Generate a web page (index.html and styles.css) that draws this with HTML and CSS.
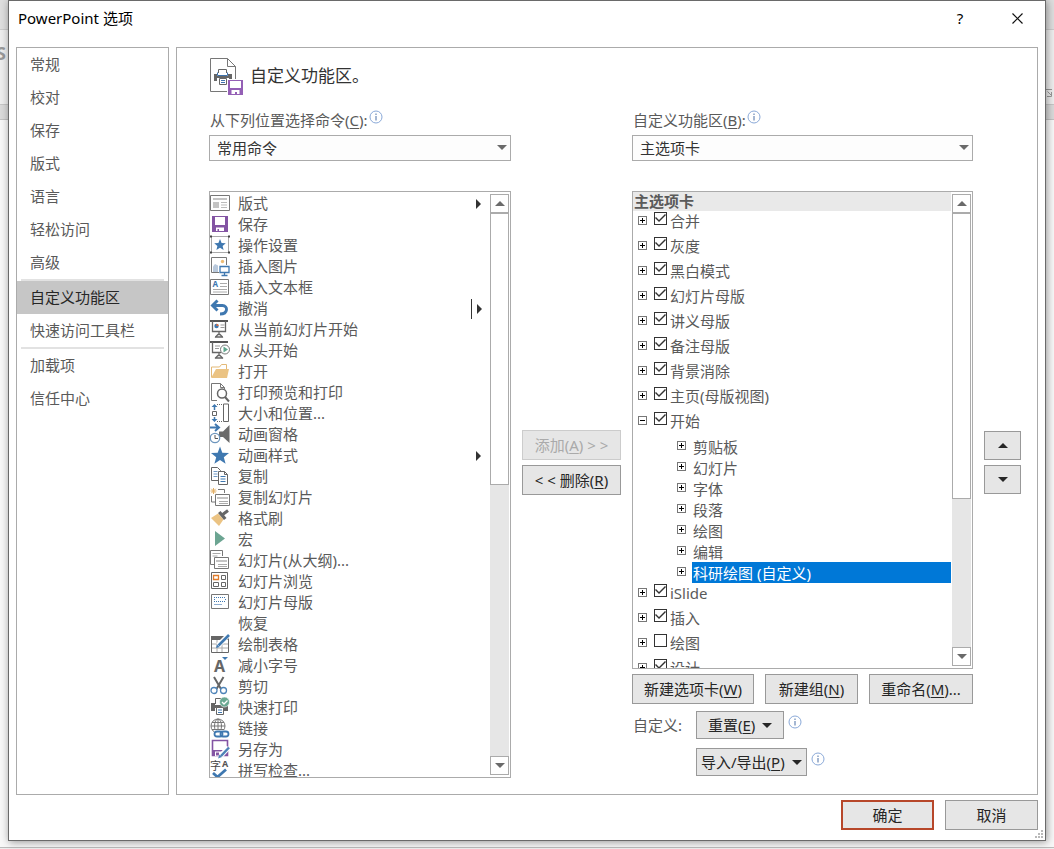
FILE: index.html
```html
<!DOCTYPE html>
<html lang="zh-CN">
<head>
<meta charset="utf-8">
<title>PowerPoint 选项</title>
<link rel="stylesheet" href="styles.css">
</head>
<body class="desktop">
<span class="backdrop-letter" aria-hidden="true">S</span>
<svg class="backdrop-launcher" width="8" height="9" viewBox="0 0 8 9" fill="none" stroke="#999"><path d="M0 .5h6M1.500 2.500l4 4M5.500 3v4.500H1"/></svg>
<div class="dialog" role="dialog" aria-labelledby="dialog-title">
  <header class="titlebar">
    <h1 class="title" id="dialog-title">PowerPoint 选项</h1>
    <button class="title-btn" type="button">?</button>
    <button class="title-btn" type="button" aria-label="关闭"><svg width="11" height="11" viewBox="0 0 11 11"><path d="M.5.5l10 10M10.500.5l-10 10" stroke="#111" stroke-width="1.2"/></svg></button>
  </header>

  <div class="content">
    <nav class="sidebar">
      <a class="nav-item" href="#">常规</a>
      <a class="nav-item" href="#">校对</a>
      <a class="nav-item" href="#">保存</a>
      <a class="nav-item" href="#">版式</a>
      <a class="nav-item" href="#">语言</a>
      <a class="nav-item" href="#">轻松访问</a>
      <a class="nav-item" href="#">高级</a>
      <hr class="nav-sep">
      <a class="nav-item nav-item-active" href="#">自定义功能区</a>
      <a class="nav-item" href="#">快速访问工具栏</a>
      <hr class="nav-sep">
      <a class="nav-item" href="#">加载项</a>
      <a class="nav-item" href="#">信任中心</a>
    </nav>

    <main class="panel">
      <div class="panel-head">
        <svg width="34" height="38" viewBox="0 0 34 38" fill="none">
          <path d="M.5.5h17l8 8v25H.5z" fill="#fff" stroke="#777"/><path d="M17.500.5v8h8" stroke="#777"/>
          <path d="M8.500 15V11.500h8V15" fill="#fff" stroke="#666"/>
          <path d="M4 16h3v2h11v-2h4v7h-3v-3H7v3H4z" fill="#666"/><path d="M7.500 14.500v3h10v-3" stroke="#3f73ad"/>
          <path d="M9.500 20.500h7v6h-7z" fill="#fff" stroke="#666"/><path d="M11 22.500h4M11 24.500h4" stroke="#3f73ad"/>
          <path d="M17 21h17v17H17z" fill="#fff"/><path d="M18 22h15v15H18z" fill="#945fb5"/><path d="M20 23h11v7H20z" fill="#fff"/><path d="M21.500 32h8v4h-2.500v-2h-2v2h-3.500z" fill="#fff"/>
        </svg>
        <h2 class="panel-title">自定义功能区。</h2>
      </div>

      <div class="columns">
        <div class="picker picker-left">
          <div class="field-label"><label for="source">从下列位置选择命令(<u>C</u>):</label><svg class="info" viewBox="0 0 14 14"><circle cx="7" cy="7" r="6"/><path d="M7 6v4.500M7 3.500v1.500"/></svg></div>
          <div class="select-box"><select id="source"><option>常用命令</option></select></div>
        </div>
        <div class="picker picker-right">
          <div class="field-label"><label for="target">自定义功能区(<u>B</u>):</label><svg class="info" viewBox="0 0 14 14"><circle cx="7" cy="7" r="6"/><path d="M7 6v4.500M7 3.500v1.500"/></svg></div>
          <div class="select-box"><select id="target"><option>主选项卡</option></select></div>
        </div>

        <div class="listbox command-box">
          <ul class="commands">
            <li><svg class="ico" viewBox="0 0 20 20"><path d="M.5 1.500h19v15H.5z" fill="#fff" stroke="#777"/><path d="M3 4h14v2H3zM3 8h6v6H3z" fill="#c4c4c4"/><path d="M11 8.500h6M11 11h6M11 13.500h6" stroke="#bbb"/></svg><span>版式</span><i class="flyout"></i></li>
            <li><svg class="ico" viewBox="0 0 20 20"><path d="M2 1h16v16H2z" fill="#8354a3"/><path d="M5 2h10v8H5zM6 12.500h8V16h-5v-2H7.500v2H6z" fill="#fff"/></svg><span>保存</span></li>
            <li><svg class="ico" viewBox="0 0 20 20"><path d="M1.500.5h17v16h-17z" fill="#fff" stroke="#aaa"/><path d="M0-.5h2v2H0zM18-.5h2v2h-2zM0 15.500h2v2H0zM18 15.500h2v2h-2z" fill="#444"/><path d="M10 3l1.600 3.900 4.200.3-3.200 2.700 1 4.100-3.600-2.200L6.400 14l1-4.100-3.200-2.700 4.200-.3z" fill="#3f78b0"/></svg><span>操作设置</span></li>
            <li><svg class="ico" viewBox="0 0 20 20"><path d="M9 15.500H1.500V.5h15V8" fill="none" stroke="#777"/><circle cx="12.500" cy="4.500" r="1.700" fill="#eebd75"/><path d="M3 15V9.500L5 7l3 1.500V15z" fill="#b9c9dc"/><path d="M10 9.500h9v6h-9zM14.500 16v3M11.500 18.500h6" fill="none" stroke="#3f78b0" stroke-width="1.300"/></svg><span>插入图片</span></li>
            <li><svg class="ico" viewBox="0 0 20 20"><path d="M.5 1.500h18v15H.5z" fill="#fff" stroke="#777"/><text x="2.500" y="9" font-size="8" font-weight="700" fill="#3f78b0">A</text><path d="M10 5.500h7M10 8.500h7M3 11.500h14M3 14h14" stroke="#aaa"/></svg><span>插入文本框</span></li>
            <li><svg class="ico" viewBox="0 0 20 20"><path d="M7.500 1.500L2.500 6.500l5 5M3 6.500h9.500c5.500 0 6 8.500-2.500 8.500" fill="none" stroke="#3f78b0" stroke-width="2.900"/></svg><span>撤消</span><i class="flyout flyout-split"></i></li>
            <li><svg class="ico" viewBox="0 0 20 20"><path d="M0 1h18" stroke="#555" stroke-width="2"/><path d="M2.500 1v10.500h13V1M9 12v3M5 17.500l3-3h2l3 3M5 17h8" fill="none" stroke="#666" stroke-width="1.300"/><circle cx="6.500" cy="6" r="2.200" fill="#3f78b0"/><path d="M6.500 6V3.800A2.200 2.200 0 0 1 8.700 6z" fill="#df6d3b"/><path d="M10.500 5h4M10.500 7.500h4" stroke="#999"/></svg><span>从当前幻灯片开始</span></li>
            <li><svg class="ico" viewBox="0 0 20 20"><path d="M0 1h18" stroke="#555" stroke-width="2"/><path d="M2.500 1v10.500h9M9 12v3M5 17.500l3-3h2l3 3M5 17h8" fill="none" stroke="#666" stroke-width="1.300"/><path d="M5 5h5M5 7.500h4" stroke="#999"/><circle cx="15" cy="8.500" r="4.500" fill="#fff" stroke="#777"/><path d="M13.500 5.500l4.500 3-4.500 3z" fill="#5fa58c"/></svg><span>从头开始</span></li>
            <li><svg class="ico" viewBox="0 0 20 20"><path d="M1.500 15V5h8l2-2.500h5V7" fill="none" stroke="#e3b977"/><path d="M1 16l5-9h13l-2 9z" fill="#ebc383"/></svg><span>打开</span></li>
            <li><svg class="ico" viewBox="0 0 20 20"><path d="M7 17.500H1.500V.5h9l4 4V6M10.500.5v4h4" fill="none" stroke="#777"/><circle cx="12" cy="10.500" r="4.500" fill="#fff" stroke="#666" stroke-width="1.500"/><path d="M15 14l4 4.500" stroke="#666" stroke-width="2"/></svg><span>打印预览和打印</span></li>
            <li><svg class="ico" viewBox="0 0 20 20"><path d="M13.500 0h5v17.500h-5z" fill="#fff" stroke="#666"/><path d="M2.500 7.500h4v4h-4z" fill="none" stroke="#666"/><path d="M7 .5h6M7 17.500h6" stroke="#666" stroke-dasharray="1 1"/><path d="M1.500 3l3-3 3 3zM1.500 15l3 3 3-3z" fill="#3f78b0"/><path d="M4.500 2v4M4.500 13v3" stroke="#3f78b0" stroke-width="1.500"/></svg><span>大小和位置...</span></li>
            <li><svg class="ico" viewBox="0 0 20 20"><path d="M0 2.500h8M5-1l4 3.500L5 6" fill="none" stroke="#3f78b0" stroke-width="2"/><path d="M9 6.500h4L19.500 0v18L13 12H9z" fill="#6b6b6b"/><circle cx="5" cy="13" r="4.700" fill="#fff" stroke="#6c95bd" stroke-width="1.300"/><path d="M5 10v3.500h3" fill="none" stroke="#555"/></svg><span>动画窗格</span></li>
            <li><svg class="ico" viewBox="0 0 20 20"><path d="M10 .5l2.300 6.200 6.700.3-5.200 4.200 1.800 6.500-5.600-3.700-5.600 3.700 1.800-6.500L1 7l6.700-.3z" fill="#3f78b0"/></svg><span>动画样式</span><i class="flyout"></i></li>
            <li><svg class="ico" viewBox="0 0 20 20"><path d="M1.500.5h6l3 3v10h-9z" fill="#fff" stroke="#666"/><path d="M3.500 4.500h4M3.500 7h4M3.500 9.500h4" stroke="#6f98c4"/><path d="M8.500 4.500h6l3 3v10h-9z" fill="#fff" stroke="#666"/><path d="M14.500 4.500v3h3" fill="none" stroke="#666"/><path d="M10.500 9.500h5M10.500 12h5M10.500 14.500h5" stroke="#3f78b0"/></svg><span>复制</span></li>
            <li><svg class="ico" viewBox="0 0 20 20"><path d="M3.500 0v6M.5 3h6M1.300.8l4.400 4.400M5.700.8L1.300 5.200" stroke="#e3b066"/><path d="M8 1.500h6.500V5M1.500 8v6H5" fill="none" stroke="#777"/><path d="M5.500 6.500h14v11h-14z" fill="#fff" stroke="#777"/><path d="M7 9h11v2H7z" fill="#c4c4c4"/><path d="M9 13.500h9M9 15.500h9" stroke="#aaa"/></svg><span>复制幻灯片</span></li>
            <li><svg class="ico" viewBox="0 0 20 20"><path d="M1 9l7-4.500 5.500 6L9 17z" fill="#ebc383"/><path d="M8 4l2.500-2 6 7-2.500 2z" fill="#666"/><path d="M12 6l6-4.500" stroke="#666" stroke-width="3"/></svg><span>格式刷</span></li>
            <li><svg class="ico" viewBox="0 0 20 20"><path d="M5 1l10 7.500L5 16z" fill="#6ca592"/></svg><span>宏</span></li>
            <li><svg class="ico" viewBox="0 0 20 20"><path d="M4 13.500H.5V-.5h12V5" fill="#fff" stroke="#777"/><path d="M2.500 2.500h8M2.500 5h5" stroke="#aaa"/><path d="M4.500 6.500h14v11h-14z" fill="#fff" stroke="#777"/><path d="M6 9h11v2H6z" fill="#c4c4c4"/><path d="M8 13.500h9M8 15.500h9" stroke="#aaa"/></svg><span>幻灯片(从大纲)...</span></li>
            <li><svg class="ico" viewBox="0 0 20 20"><path d="M1.500.5h16v16h-16z" fill="#fff" stroke="#666"/><path d="M11.500 3.500h4v4h-4zM3.500 10.500h5v4h-5zM11.500 10.500h4v4h-4z" fill="none" stroke="#666"/><path d="M3.500 3.500h5v4h-5z" fill="none" stroke="#df7b2b" stroke-width="1.300"/></svg><span>幻灯片浏览</span></li>
            <li><svg class="ico" viewBox="0 0 20 20"><path d="M1.500 1.500h17v14h-17z" fill="#fff" stroke="#777"/><path d="M4 4.500h12M4 8.500h12" stroke="#3f78b0" stroke-dasharray="1 1"/><path d="M4 6.500h1M15 6.500h1" stroke="#3f78b0"/><path d="M4 11.500h8" stroke="#8faed0"/></svg><span>幻灯片母版</span></li>
            <li><svg class="ico" viewBox="0 0 20 20"></svg><span>恢复</span></li>
            <li><svg class="ico" viewBox="0 0 20 20"><path d="M1.500 1.500h17v16h-17z" fill="#fff" stroke="#666"/><path d="M1 1h17v4H1z" fill="#666"/><path d="M2 9h16M2 13h16M7 5v12M12 5v12" stroke="#aaa"/><path d="M18.500 0L8 10.500" stroke="#fff" stroke-width="5"/><path d="M19 0L8.500 10.500" stroke="#3f78b0" stroke-width="2.700"/><path d="M6 13l1-3.500L9.500 12z" fill="#3f78b0"/></svg><span>绘制表格</span></li>
            <li><svg class="ico" viewBox="0 0 20 20"><text x="4" y="16" font-size="16" font-weight="700" fill="#666">A</text><path d="M12 1h6l-3 3z" fill="#3f78b0"/></svg><span>减小字号</span></li>
            <li><svg class="ico" viewBox="0 0 20 20"><path d="M4 0l7 12M13.500 0l-7 12" stroke="#666" stroke-width="2"/><circle cx="4" cy="13.500" r="3" fill="#fff" stroke="#4d83b8" stroke-width="1.300"/><circle cx="13.500" cy="13.500" r="3" fill="#fff" stroke="#4d83b8" stroke-width="1.300"/></svg><span>剪切</span></li>
            <li><svg class="ico" viewBox="0 0 20 20"><path d="M5.500 6V.5h8V6" fill="#fff" stroke="#666"/><path d="M1 5h4v2h8V5h5v8h-4v-3H5v3H1z" fill="#666"/><path d="M6.500 9.500h7v7h-7z" fill="#fff" stroke="#666"/><path d="M8 12h4M8 14.500h4" stroke="#3f78b0"/><circle cx="14.500" cy="4" r="5" fill="#6aa892" stroke="#fff" stroke-width=".6"/><path d="M12 4l2 2 3.500-3.500" fill="none" stroke="#fff" stroke-width="1.300"/></svg><span>快速打印</span></li>
            <li><svg class="ico" viewBox="0 0 20 20"><g fill="none" stroke="#777"><circle cx="8" cy="7" r="7"/><ellipse cx="8" cy="7" rx="3.500" ry="7"/><path d="M8 0v14M1 7h14M2 3.500h12M2 10.500h12"/></g><path d="M4 11h16v8H4z" fill="#fff"/><rect x="4.500" y="12.500" width="8" height="5" rx="2.500" fill="none" stroke="#3f78b0" stroke-width="1.800"/><rect x="10.500" y="12.500" width="8" height="5" rx="2.500" fill="none" stroke="#3f78b0" stroke-width="1.800"/></svg><span>链接</span></li>
            <li><svg class="ico" viewBox="0 0 20 20"><path d="M2.500.5h15v15h-15z" fill="#fff" stroke="#8354a3" stroke-width="1.600"/><path d="M2 10h15v6H2z" fill="#8354a3"/><path d="M5 11.500h9V16H5z" fill="#fff"/><path d="M6 12.500h3v3H6z" fill="#8354a3"/><path d="M18.500 7.500l-8 8.500" stroke="#fff" stroke-width="5"/><path d="M19 7.500l-8 8.500" stroke="#4d83b8" stroke-width="2.500"/><path d="M8 18.500l1.500-4 2.500 2.500z" fill="#4d83b8"/></svg><span>另存为</span></li>
            <li><svg class="ico" viewBox="0 0 20 20"><text x="0" y="9" font-size="11" fill="#444">字</text><text x="12" y="6" font-size="9" font-weight="700" fill="#555">A</text><path d="M3 12l4.500 4L16 8.500" fill="none" stroke="#3f78b0" stroke-width="2.800"/></svg><span>拼写检查...</span></li>
          </ul>
          <div class="scrollbar">
            <button class="scroll-btn" type="button" aria-label="向上滚动"><i class="tri tri-up"></i></button>
            <div class="scroll-track"><div class="scroll-thumb thumb-commands"></div></div>
            <button class="scroll-btn" type="button" aria-label="向下滚动"><i class="tri tri-down"></i></button>
          </div>
        </div>

        <div class="transfer">
          <button class="btn" type="button" disabled>添加(<u>A</u>) &gt; &gt;</button>
          <button class="btn" type="button">&lt; &lt; 删除(<u>R</u>)</button>
        </div>

        <div class="target-col">
          <div class="listbox tree-box">
            <div class="tree-view">
              <div class="tree-head">主选项卡</div>
              <ul class="tree">
                <li class="node"><button class="expander" type="button" aria-label="展开"></button><label><input type="checkbox" checked>合并</label></li>
                <li class="node"><button class="expander" type="button" aria-label="展开"></button><label><input type="checkbox" checked>灰度</label></li>
                <li class="node"><button class="expander" type="button" aria-label="展开"></button><label><input type="checkbox" checked>黑白模式</label></li>
                <li class="node"><button class="expander" type="button" aria-label="展开"></button><label><input type="checkbox" checked>幻灯片母版</label></li>
                <li class="node"><button class="expander" type="button" aria-label="展开"></button><label><input type="checkbox" checked>讲义母版</label></li>
                <li class="node"><button class="expander" type="button" aria-label="展开"></button><label><input type="checkbox" checked>备注母版</label></li>
                <li class="node"><button class="expander" type="button" aria-label="展开"></button><label><input type="checkbox" checked>背景消除</label></li>
                <li class="node"><button class="expander" type="button" aria-label="展开"></button><label><input type="checkbox" checked>主页(母版视图)</label></li>
                <li class="node"><button class="expander expander-open" type="button" aria-label="折叠"></button><label><input type="checkbox" checked>开始</label></li>
                <li>
                  <ul class="subtree">
                    <li class="leaf"><button class="expander" type="button" aria-label="展开"></button><span>剪贴板</span></li>
                    <li class="leaf"><button class="expander" type="button" aria-label="展开"></button><span>幻灯片</span></li>
                    <li class="leaf"><button class="expander" type="button" aria-label="展开"></button><span>字体</span></li>
                    <li class="leaf"><button class="expander" type="button" aria-label="展开"></button><span>段落</span></li>
                    <li class="leaf"><button class="expander" type="button" aria-label="展开"></button><span>绘图</span></li>
                    <li class="leaf"><button class="expander" type="button" aria-label="展开"></button><span>编辑</span></li>
                    <li class="leaf leaf-selected"><button class="expander" type="button" aria-label="展开"></button><span>科研绘图 (自定义)</span></li>
                  </ul>
                </li>
                <li class="node"><button class="expander" type="button" aria-label="展开"></button><label><input type="checkbox" checked>iSlide</label></li>
                <li class="node"><button class="expander" type="button" aria-label="展开"></button><label><input type="checkbox" checked>插入</label></li>
                <li class="node"><button class="expander" type="button" aria-label="展开"></button><label><input type="checkbox">绘图</label></li>
                <li class="node"><button class="expander" type="button" aria-label="展开"></button><label><input type="checkbox" checked>设计</label></li>
              </ul>
            </div>
            <div class="scrollbar">
              <button class="scroll-btn" type="button" aria-label="向上滚动"><i class="tri tri-up"></i></button>
              <div class="scroll-track"><div class="scroll-thumb thumb-tree"></div></div>
              <button class="scroll-btn" type="button" aria-label="向下滚动"><i class="tri tri-down"></i></button>
            </div>
          </div>
          <div class="tab-actions">
            <button class="btn" type="button">新建选项卡(<u>W</u>)</button>
            <button class="btn" type="button">新建组(<u>N</u>)</button>
            <button class="btn" type="button">重命名(<u>M</u>)...</button>
          </div>
          <div class="custom">
            <span class="custom-label">自定义:</span>
            <div class="custom-row"><button class="btn btn-menu btn-reset" type="button"><span>重置(<u>E</u>)</span><i class="tri tri-down"></i></button><svg class="info" viewBox="0 0 14 14"><circle cx="7" cy="7" r="6"/><path d="M7 6v4.500M7 3.500v1.500"/></svg></div>
            <div class="custom-row custom-export"><button class="btn btn-menu" type="button"><span>导入/导出(<u>P</u>)</span><i class="tri tri-down"></i></button><svg class="info" viewBox="0 0 14 14"><circle cx="7" cy="7" r="6"/><path d="M7 6v4.500M7 3.500v1.500"/></svg></div>
          </div>
        </div>

        <div class="reorder">
          <button class="btn" type="button" aria-label="上移"><i class="tri tri-up"></i></button>
          <button class="btn" type="button" aria-label="下移"><i class="tri tri-down"></i></button>
        </div>
      </div>
    </main>
  </div>

  <footer class="footer">
    <button class="btn btn-default" type="button">确定</button>
    <button class="btn" type="button">取消</button>
  </footer>
  <svg class="grip" width="8" height="8" viewBox="0 0 8 8"><path d="M6 0h2v2H6zM3 3h2v2H3zM6 3h2v2H6zM0 6h2v2H0zM3 6h2v2H3zM6 6h2v2H6z" fill="#b9b9b9"/></svg>
</div>
</body>
</html>
```
FILE: styles.css
```css
* { box-sizing: border-box; }

.desktop {
  position: relative;
  margin: 0;
  min-height: 100vh;
  padding: 0 8px 8px;
  overflow: hidden;
  background: linear-gradient(#dedede 29px, #cbcbcb 29px 30px, #eee 30px 104px, #c6c6c6 104px 105px, #dadada 105px 119px, #c2c2c2 119px 120px, #f8f8f8 120px calc(100% - 2px), #bbb calc(100% - 2px) calc(100% - 1px), #eee calc(100% - 1px));
  color: #5a5a5a;
  font: 15px/21px "Noto Sans", "Noto Sans CJK SC", sans-serif;
}

.backdrop-letter {
  position: absolute;
  left: -4px;
  top: 43px;
  color: #999;
  font-size: 18px;
  font-weight: 700;
}
.backdrop-launcher { position: absolute; right: 0; top: 89px; }

button, select, input { font: inherit; color: inherit; margin: 0; padding: 0; }
ul { list-style: none; margin: 0; padding: 0; }
u { text-underline-offset: 2px; }

.dialog {
  position: relative;
  display: flex;
  flex-direction: column;
  min-height: calc(100vh - 8px);
  padding: 0 7px 10px;
  background: #fff;
  border: 1px solid #6a6a6a;
  box-shadow: 1px 1px 8px rgba(0, 0, 0, .4);
}

.titlebar { display: flex; align-items: center; height: 46px; padding: 0 1px 12px 2px; }
.title { flex: 1; margin: 0; color: #000; font-size: 15px; font-weight: 400; }
.title-btn {
  display: flex;
  align-items: center;
  justify-content: center;
  width: 24px;
  height: 24px;
  margin-right: 8px;
  border: 0;
  background: none;
  color: #000;
}
.title-btn:first-of-type { margin-right: 33px; }

.content { flex: 1; display: grid; grid-template-columns: 153px 1fr; gap: 7px; }
.sidebar, .panel { border: 1px solid #ababab; }

.nav-item {
  display: block;
  padding-left: 13px;
  line-height: 33px;
  color: #5a5a5a;
  text-decoration: none;
}
.nav-item-active { background: #c6c6c6; color: #262626; }
.nav-sep { height: 2px; margin: 0 4px; border: 0; background: #e2e2e2; }

.panel { display: flex; flex-direction: column; padding: 10px 16px 16px 32px; }
.panel-head { display: flex; gap: 6px; height: 38px; margin-bottom: 14px; padding-left: 1px; }
.panel-title { margin: 0; color: #333; font-size: 17px; font-weight: 400; line-height: 35px; }

.columns {
  flex: 1;
  display: grid;
  grid-template-columns: 302fr 99px 341fr 37px;
  grid-template-rows: auto 1fr;
  gap: 30px 11px;
}
.picker-left { grid-column: 1; }
.picker-right { grid-column: 3; }
.field-label { display: flex; gap: 1px; margin-bottom: 4px; padding-left: 1px; }
.info { width: 14px; height: 14px; flex: none; fill: #fff; stroke: #8aa9d8; }
.info path { stroke: #4a6fa5; }

.select-box { position: relative; }
.select-box::after {
  content: "";
  position: absolute;
  right: 4px;
  top: 10px;
  border: 5px solid transparent;
  border-top-color: #6a6a6a;
  border-bottom: 0;
  pointer-events: none;
}
.select-box select {
  display: block;
  width: 100%;
  height: 26px;
  padding: 0 7px;
  appearance: none;
  border: 1px solid #ababab;
  border-radius: 0;
  background: #fdfdfd;
  color: #333;
}

.listbox { display: flex; border: 1px solid #ababab; background: #fff; overflow: hidden; }
.command-box { grid-column: 1; height: 0; min-height: 100%; }
.commands { flex: 1; padding-top: 1px; }
.commands li { display: flex; align-items: center; gap: 8px; height: 21px; padding-right: 8px; }
.commands span { flex: 1; }
.ico { width: 20px; height: 20px; overflow: visible; }

.flyout { border: 5px solid transparent; border-left-color: #333; border-right: 0; }
.flyout-split { display: flex; align-items: center; gap: 5px; border: 0; }
.flyout-split::before { content: ""; width: 1px; height: 20px; background: #333; }
.flyout-split::after { content: ""; border: 5px solid transparent; border-left-color: #333; border-right: 0; }
.commands li:has(.flyout-split) { padding-right: 7px; }

.scrollbar { display: flex; flex-direction: column; flex: none; width: 19px; margin: 2px 1px; }
.scroll-btn {
  display: flex;
  align-items: center;
  justify-content: center;
  width: 19px;
  height: 19px;
  border: 1px solid #ababab;
  background: #fff;
  color: #6a6a6a;
}
.scroll-track { flex: 1; background: #e6e6e6; }
.scroll-thumb { border: 1px solid #ababab; background: #fff; }
.thumb-commands { height: 50%; }
.thumb-tree { height: 66%; }

.tri { border: 5px solid transparent; }
.tri-up { border-bottom-color: currentColor; border-top: 0; }
.tri-down { border-top-color: currentColor; border-bottom: 0; }

.btn {
  display: flex;
  align-items: center;
  justify-content: center;
  height: 30px;
  border: 1px solid #999;
  background: #e6e6e6;
  color: #262626;
  white-space: pre;
}
.btn:disabled { border-color: #ccc; color: #aaa; }

.transfer, .reorder { display: flex; flex-direction: column; gap: 5px; padding-top: 239px; }

.target-col { display: flex; flex-direction: column; }
.tree-box { flex: 1 1 0; min-height: 0; }
.tree-view { flex: 1; }
.tree-head { height: 19px; padding-left: 1px; background: #e9e9e9; font-weight: 700; line-height: 19px; }

.node { display: flex; align-items: flex-start; gap: 7px; height: 25px; padding-left: 5px; }
.node label { display: flex; gap: 3px; }
.node input {
  width: 13px;
  height: 13px;
  margin-top: 1px;
  appearance: none;
  border: 1px solid #333;
  background: #fff;
}
.node input:checked::before {
  content: "";
  display: block;
  width: 11px;
  height: 11px;
  background: #333;
  clip-path: polygon(0 5px, 1px 4px, 4px 7px, 10px 1px, 11px 2px, 4px 9px);
}
.expander {
  width: 9px;
  height: 9px;
  flex: none;
  margin-top: 5px;
  border: 1px solid #777;
  background: linear-gradient(#000, #000) center / 5px 1px no-repeat, linear-gradient(#000, #000) center / 1px 5px no-repeat, #fff;
}
.expander-open { background: linear-gradient(#000, #000) center / 5px 1px no-repeat, #fff; }
.leaf { display: flex; gap: 6px; height: 21px; padding-left: 44px; }
.leaf span { flex: 1; padding: 1px 0 0 1px; }
.leaf-selected span { background: #0078d7; color: #fff; }

.tab-actions { display: grid; grid-template-columns: 122fr 93fr 104fr; gap: 11px; margin: 5px 0 7px; }

.custom { display: grid; grid-template-columns: 64px 1fr; row-gap: 9px; margin-bottom: 2px; }
.custom-label { padding-left: 1px; line-height: 28px; }
.custom-row { display: flex; gap: 4px; }
.custom-row .info { margin-top: 4px; }
.custom-export { grid-column: 2; }
.btn-menu { gap: 7px; height: 28px; padding: 0 4px; }
.btn-reset { padding: 0 11px; }

.reorder { padding-top: 240px; }
.reorder .btn { height: 29px; }

.footer { display: flex; justify-content: flex-end; gap: 11px; padding-top: 5px; }
.footer .btn { width: 93px; }
.btn-default { border: 2px solid #b7472a; }
.grip { position: absolute; right: 2px; bottom: 2px; }
```
